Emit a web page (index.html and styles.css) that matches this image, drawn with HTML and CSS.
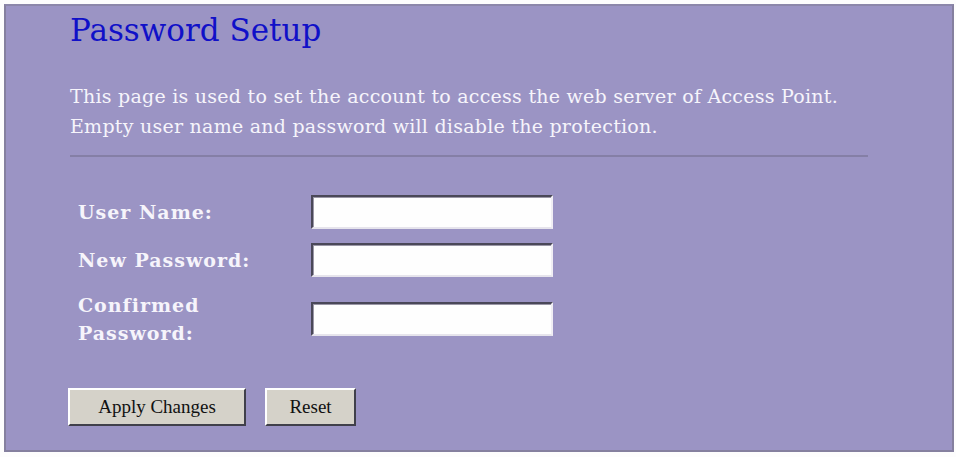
FILE: index.html
```html
<!DOCTYPE html>
<html>
<head>
<meta charset="utf-8">
<link rel="stylesheet" href="styles.css">
</head>
<body>
<div class="frame">
  <div class="content">
    <h1 class="title">Password Setup</h1>
    <p class="desc">This page is used to set the account to access the web server of Access Point.<br>Empty user name and password will disable the protection.</p>
    <hr class="rule">
    <form class="form">
      <div class="row">
        <label class="label">User Name:</label>
        <input class="field" type="text">
      </div>
      <div class="row">
        <label class="label">New Password:</label>
        <input class="field" type="password">
      </div>
      <div class="row row-tall">
        <label class="label">Confirmed<br>Password:</label>
        <input class="field" type="password">
      </div>
      <div class="actions">
        <button class="btn btn-apply" type="button">Apply Changes</button>
        <button class="btn btn-reset" type="button">Reset</button>
      </div>
    </form>
  </div>
</div>
</body>
</html>
```
FILE: styles.css
```css
html, body {
  margin: 0;
  padding: 0;
  background: #fdfdfd;
}
body {
  padding: 4px 2px 5px 4px;
  width: 956px;
  height: 457px;
  box-sizing: border-box;
}
.frame {
  height: 448px;
  box-sizing: border-box;
  background: #9b94c4;
  border: 2px solid #85809f;
  border-top-color: #8c87aa;
  font-family: "DejaVu Serif", "Liberation Serif", serif;
}
.content {
  padding: 5px 0 0 64px;
}
.title {
  margin: 0;
  font-weight: normal;
  font-size: 31px;
  line-height: 38px;
  color: #1010c8;
}
.desc {
  margin: 32px 0 0 0;
  color: #f6f4fb;
  font-size: 19px;
  line-height: 30px;
  letter-spacing: 0.25px;
}
.rule {
  margin: 14px 0 0 0;
  width: 798px;
  height: 0;
  border: 0;
  border-top: 2px solid #857fa6;
}
.form {
  margin-top: 31px;
}
.row {
  display: flex;
  align-items: center;
  height: 48px;
}
.row-tall {
  height: 70px;
}
.label {
  width: 233px;
  padding-left: 8px;
  color: #f6f4fb;
  font-weight: bold;
  font-size: 19px;
  line-height: 28px;
  letter-spacing: 1px;
}
.field {
  width: 242px;
  height: 34px;
  box-sizing: border-box;
  margin: 0;
  background: #fefefe;
  border: 2px solid;
  border-color: #4a4858 #f0eef4 #e6e4ec #4a4858;
  box-shadow: inset 1px 1px 0 #9a97a6;
}
.actions {
  display: flex;
  gap: 19px;
  margin: 34px 0 0 -2px;
}
.btn {
  height: 38px;
  margin: 0;
  padding: 0;
  background: #d5d2c9;
  border: 2px solid;
  border-color: #ffffff #40404a #40404a #ffffff;
  font-family: "Liberation Serif", serif;
  font-size: 19px;
  color: #111;
}
.btn-apply {
  width: 178px;
}
.btn-reset {
  width: 91px;
}
```
